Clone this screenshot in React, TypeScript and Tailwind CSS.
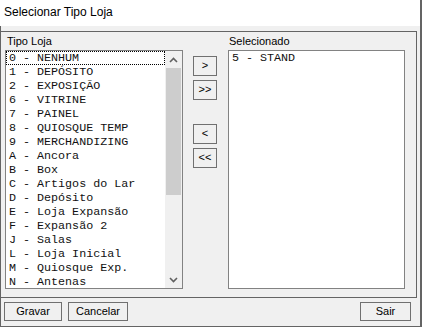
const TIPOS = [
  "0 - NENHUM",
  "1 - DEPÓSITO",
  "2 - EXPOSIÇÃO",
  "6 - VITRINE",
  "7 - PAINEL",
  "8 - QUIOSQUE TEMP",
  "9 - MERCHANDIZING",
  "A - Ancora",
  "B - Box",
  "C - Artigos do Lar",
  "D - Depósito",
  "E - Loja Expansão",
  "F - Expansão 2",
  "J - Salas",
  "L - Loja Inicial",
  "M - Quiosque Exp.",
  "N - Antenas",
];

const SELECIONADOS = ["5 - STAND"];

const mono = { fontFamily: '"Liberation Mono", "Courier New", monospace' };

export default function App() {
  return (
    <div
      className="flex h-[327px] w-[422px] flex-col overflow-hidden border-r-2 border-[#646464] bg-[#f0f0f0] text-black"
      style={{ fontFamily: '"Liberation Sans", Arial, sans-serif' }}
    >
      {/* title bar */}
      <div className="flex h-[26px] shrink-0 items-center bg-white pl-[4px] pb-[2px] text-[12px]">
        Selecionar Tipo Loja
      </div>

      <div className="flex flex-1 flex-col border-l border-b border-[#646464]">
        <div className="h-[5px] shrink-0" />

        {/* group box */}
        <div className="-ml-px flex h-[267px] w-[417px] shrink-0 border border-[#646464] pl-[4px]">
          <div className="flex w-[178px] flex-col">
            <div className="h-[18px] pl-[2px] pt-[2px] text-[11px] leading-[14px]">Tipo Loja</div>
            <ListBox items={TIPOS} scroll focused={0} />
          </div>

          <div className="ml-[10px] flex w-[24px] flex-col pt-[24px]">
            <ArrowButton label=">" />
            <ArrowButton label=">>" className="mt-[4px]" />
            <ArrowButton label="<" className="mt-[24px]" />
            <ArrowButton label="<<" className="mt-[4px]" />
          </div>

          <div className="ml-[11px] flex w-[177px] flex-col">
            <div className="h-[18px] pl-[1px] pt-[2px] text-[11px] leading-[14px]">Selecionado</div>
            <ListBox items={SELECIONADOS} />
          </div>
        </div>

        {/* footer */}
        <div className="flex flex-1 items-start pt-[4px] pl-[3px] pr-[9px]">
          <PushButton label="Gravar" className="w-[58px]" />
          <PushButton label="Cancelar" className="ml-[6px] w-[60px]" />
          <div className="flex-1" />
          <PushButton label="Sair" className="w-[51px]" />
        </div>
      </div>
    </div>
  );
}

function ListBox({ items, scroll, focused }: { items: string[]; scroll?: boolean; focused?: number }) {
  return (
    <div className="flex h-[239px] border border-[#828282] bg-white">
      <div className="flex-1 overflow-hidden text-[#111]" style={mono}>
        {items.map((t, i) => (
          <div
            key={t}
            className={
              "h-[14px] whitespace-pre pl-[3px] text-[11.7px] leading-[14px] " +
              (i === focused ? "outline-1 outline-dotted -outline-offset-1 outline-black" : "")
            }
          >
            {t}
          </div>
        ))}
      </div>
      {scroll && (
        <div className="flex w-[17px] flex-col bg-[#f0f0f0]">
          <div className="flex h-[17px] items-center justify-center">
            <svg width="9" height="6" viewBox="0 0 9 6">
              <path d="M1 5 L4.5 1.5 L8 5" fill="none" stroke="#606060" strokeWidth="1.6" />
            </svg>
          </div>
          <div className="mx-[1px] h-[127px] bg-[#cdcdcd]" />
          <div className="flex-1" />
          <div className="flex h-[17px] items-center justify-center">
            <svg width="9" height="6" viewBox="0 0 9 6">
              <path d="M1 1 L4.5 4.5 L8 1" fill="none" stroke="#606060" strokeWidth="1.6" />
            </svg>
          </div>
        </div>
      )}
    </div>
  );
}

function ArrowButton({ label, className = "" }: { label: string; className?: string }) {
  return (
    <button
      className={
        "flex h-[20px] w-[24px] items-center justify-center border border-[#707070] bg-[#f0f0f0] pb-[1px] text-[11px] leading-none " +
        className
      }
    >
      {label}
    </button>
  );
}

function PushButton({ label, className = "" }: { label: string; className?: string }) {
  return (
    <button
      className={
        "flex h-[19px] items-center justify-center border border-[#707070] bg-[#f0f0f0] text-[11px] leading-none " +
        className
      }
    >
      {label}
    </button>
  );
}
